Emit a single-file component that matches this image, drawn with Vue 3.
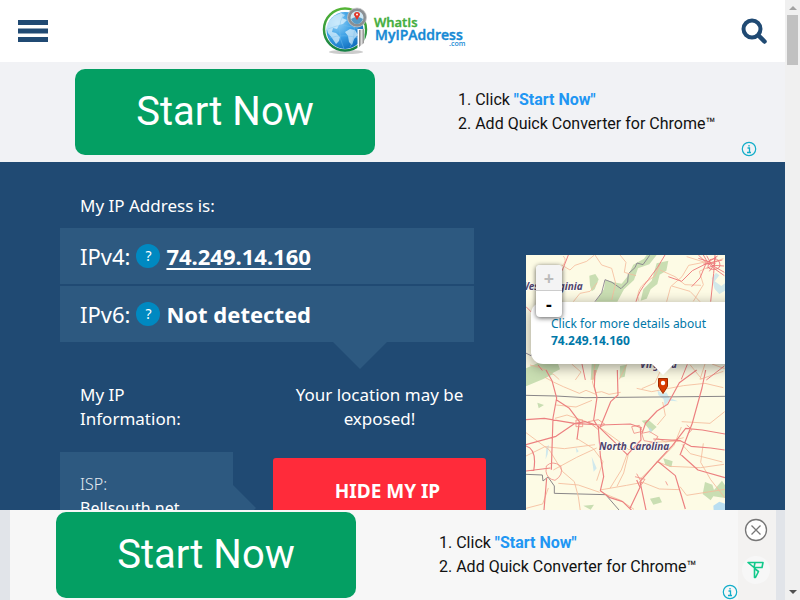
<script setup>
const steps = [
  { lead: '1. Click ', link: '"Start Now"' },
  { lead: '2. Add Quick Converter for Chrome™', link: '' },
]
const addresses = [
  { label: 'IPv4:', value: '74.249.14.160', href: '#ip' },
  { label: 'IPv6:', value: 'Not detected', href: '' },
]
</script>

<template>
  <div class="window">
    <div class="page">
      <header class="header">
        <button class="icon-button" aria-label="Menu">
          <svg width="30" height="22" viewBox="0 0 30 22" fill="#204a73"><path d="M0 0h30v5H0zM0 8.5h30v5H0zM0 17h30v5H0z" /></svg>
        </button>
        <a class="logo" href="#home" aria-label="What Is My IP Address">
          <svg width="148" height="52" viewBox="0 0 148 52">
            <defs>
              <radialGradient id="sea" cx=".3" cy=".3" r=".8"><stop offset="0" stop-color="#8fd0f7" /><stop offset=".5" stop-color="#3a9fe4" /><stop offset="1" stop-color="#0d69ba" /></radialGradient>
              <linearGradient id="ring" x2="0" y2="1"><stop stop-color="#54b435" /><stop offset="1" stop-color="#168246" /></linearGradient>
              <linearGradient id="steel"><stop stop-color="#777" /><stop offset=".5" stop-color="#ddd" /><stop offset="1" stop-color="#888" /></linearGradient>
            </defs>
            <ellipse cx="25" cy="47" rx="17" ry="2" fill="#ccc" />
            <circle cx="24" cy="24.500" r="21" fill="#fff" stroke="url(#ring)" stroke-width="2.500" />
            <circle cx="24" cy="25.500" r="18.500" fill="url(#sea)" />
            <path d="M9 15l4-4 7-3 4 2-3 3 5 2-4 4-4 1-2 4-4-1-1 4 4 1 4 4-1 4-3 3-4-6-4-5-2-7zM29 24l5 1 3 5-4 4-2 6-3-3-1-6-3-4z" fill="#e4f5fd" opacity=".7" />
            <path d="M7 24q16-8 34 2M8 33q15-5 33 1M23 8q-9 16 0 36M29 8q9 18 0 34" fill="none" stroke="#75c1ed" stroke-width=".7" opacity=".6" />
            <path d="M36.500 24h7v14l-5 5h-2z" fill="#fff" />
            <path d="M38 25l5-1v14l-5 4z" fill="url(#steel)" />
            <circle cx="36" cy="12.500" r="8" fill="#cfe8f4" stroke="#8b8f93" stroke-width="3" />
            <circle cx="36" cy="12.500" r="9.500" fill="none" stroke="#c8c8c8" stroke-width=".8" />
            <path d="M30 14q6-4 12 0-2 5-6 5t-6-5" fill="#569ac5" />
            <path d="M36 15l-3-5a3 3 0 1 1 6 0z" fill="#e23527" /><circle cx="36" cy="9.500" r="1" fill="#fff" />
            <g font-family="'Open Sans', sans-serif" font-weight="600">
              <text x="53" y="22" font-size="13" fill="#43ad3d" stroke="#43ad3d" stroke-width=".4">WhatIs</text>
              <text x="54" y="35" font-size="14" fill="#1689d4" stroke="#1689d4" stroke-width=".4">MyIPAddress</text>
              <text x="128" y="41" font-size="7" fill="#1689d4">.com</text>
            </g>
          </svg>
        </a>
        <button class="icon-button" aria-label="Search">
          <svg width="26" height="26" viewBox="0 0 26 26" fill="none" stroke="#204a73"><circle cx="11" cy="11" r="8.500" stroke-width="4" /><path d="M17.500 17.500l6 6" stroke-width="4.500" stroke-linecap="round" /></svg>
        </button>
      </header>

      <section class="ad ad-top">
        <a class="start" href="#start">Start Now</a>
        <div class="steps">
          <div v-for="s in steps" :key="s.lead">{{ s.lead }}<a v-if="s.link" href="#start">{{ s.link }}</a></div>
        </div>
        <a class="ad-info" href="#adinfo" aria-label="Ad information">
          <svg width="16" height="16" viewBox="0 0 16 16" fill="none" stroke="#12adc9"><circle cx="8" cy="8" r="6.700" stroke-width="1.200" /><path d="M6.500 7h2v4.500M6 11.500h4M8 4v1.500" stroke-width="1.300" /></svg>
        </a>
      </section>

      <main class="hero">
        <div class="details">
          <h1>My IP Address is:</h1>
          <div class="addresses">
            <div v-for="a in addresses" :key="a.label" class="address">
              <span>{{ a.label }}</span>
              <button class="help" :aria-label="'About ' + a.label">?</button>
              <a v-if="a.href" class="value" :href="a.href">{{ a.value }}</a>
              <strong v-else class="value">{{ a.value }}</strong>
            </div>
          </div>
          <div class="columns">
            <section class="information">
              <h2>My IP<br />Information:</h2>
              <div class="isp"><span>ISP:</span><div>Bellsouth.net</div></div>
            </section>
            <section class="exposure">
              <h2>Your location may be exposed!</h2>
              <a class="hide" href="#hide">HIDE MY IP</a>
            </section>
          </div>
        </div>

        <div class="map">
          <svg class="tiles" viewBox="526 255 199 255" preserveAspectRatio="xMinYMin slice">
            <rect x="526" y="255" width="199" height="255" fill="#fdfbe5" />
            <g transform="translate(520 250) scale(.33333)" fill="none" stroke-linejoin="round">
              <g fill="#c9deb2">
                <path d="M380 15h30l-22 28-34 12-12 35-30 28-20 37h-65l25-38 4-28 25 8 24 4 18-22 17-35 32-18zM208 77l18-5 10 16-12 30-9 6-5-18zM410 40l35-8-6 30-20 12-7 28-20 16-12 28-18 6 8-34 25-26zM18 355l38-17 56-2 8 22-28 14-40 2-34 22zM215 342h24l-18 46-9 2zM66 62l10-8-2 26zM300 348l20-4-6 36-15 4z" />
              </g>
              <g fill="#bfdfed"><path d="M575 85l13-17 10 8-14 18 20 14 11-8v22l-17 10-14-15-5-18z" fill-opacity=".7" /></g>
              <path d="M15 308l18 9 15-18M245 128l10-39 21 8 27 19 20-20 2-25 20-18 6-14 18 5 20-28M225 155l20-27" stroke="#82798a" stroke-width="2.500" />
              <g stroke="#f5bd9e" stroke-width="2.500">
                <path d="M125 45l25 15 15-14 35-12 22-18M130 18q12 14-2 28M225 15l20 30 30 10 12 45-12 50M160 155l20-25 30-6 22-26M300 15l18 22-5 30 35 10M355 152q-8-30 20-54l30-20 15-35M440 155l12-45 34-30 20-34 60-12M455 108l55 16 30 31M520 154l30-50-12-40 25-12M420 60l45 20 30 24 48 2M30 345q60 12 88 44M155 342l28 24-17 24M225 342l-8 48M320 344l-22 44M510 344l36 44M555 342l-15 46 70-24M500 20l65 20 45-14M576 342l38 14" />
              </g>
              <g stroke="#ef8383" stroke-width="3">
                <path d="M145 15l-18 46-20 2-6 25M348 155q7-30 37-66t50-74M445 80l40 14 32-32 40-20 50-12M550 15l14 24 18 16 31 22M535 15l24 23-19 46-25 26M585 15l-4 55-9 85M18 170l18 18 8 40M54 345l20 25M186 342l10 48M502 343l-18 45M613 348l-54 42" />
              </g>
              <g stroke="#ea6f73" stroke-width="2.500"><path d="M560 17l15 28 38 22M535 25l32 10 26-17M560 55l22-9 30 2M550 42l31-1 7-22M587 38l-19 26M570 29q24-8 29 10t-17 19-17-14z" /></g>
            </g>
            <g transform="translate(520 370) scale(.33333)" fill="none" stroke-linejoin="round">
              <g fill="#c9deb2"><path d="M18 8l60-8 22 12-30 15-52 22zM430 265l28 9-4 18-18-8zM555 336l22 8 5 16 24-28 9 14v38l-35-5-8 12-24-19zM390 386l28-6 8 17-26 7zM190 407l32-3-10 15zM52 98l20 7-16 10zM365 152l20-3 25 22-16 14-17-20z" /></g>
              <g fill="#b9def1"><path d="M580 407l18-12 17 6v21h-34z" /><path d="M412 60l15 12 12-5 10 17 25 10-28-2-12 18-3-22-16-13zM79 230l8-5-4 28-6 15 1-22zM167 232l9 12-6 4zM215 260l15 35-9 10zM386 170l11 10-8 12z" opacity=".65" /></g>
              <path d="M18 76l90 2 87 5 420-4M18 313l49 2 2 18 15-12 19 27v22l154 4 40 46" stroke="#898688" stroke-width="3" />
              <g stroke="#f4ba9a" stroke-width="2.500">
                <path d="M75 22l25 14 30 14 48 20 20-9 30 12M230 0l-13 36 10 32 18-3 22 8 35-6M365 56l40-17 15-34M350 55l45 10 95-18 65-7 55 13M108 105l60 6 48-20M105 145l36-10 58 20M18 188l70 52 40 65 35 30 12 45 6 43M170 205l50 31 29 39-19 57M18 258l57-28 58 6 92-12M100 300l70-38 60-28M115 340l60 5 64 22M240 360l80-14 48-9 50 20 62 2M320 256l-16 44-34 55M239 172l58 42 29 25 72-22 84-4M325 253l-14 56-20 40M360 328l55-53 47-49 22-55M410 275l40 14 92 4 70-10M485 155l85 5 44-35M486 223l25 28 96 25M550 220l-8 57 30 52 43 55M18 415l50-13 17-48M255 372l45 18 42 28M480 350l20 26 115-18M410 204l27 12 54-13M412 165l24-29-8-40" />
              </g>
              <g stroke="#ec8080" stroke-width="3.500">
                <path d="M78 0l18 32 14 52-11 60-5 155M18 149l55-4 90 15 78 5 90-3 35 12M18 224l90-25 55-38 32-6 40 12M18 228q34 10 23 75M225 0l-2 50 8 32-10 68 14 22 6 84 10 64-10 42 29 21 38 12 27 26M292 0l2 75-22 20-31 76M530 0l-52 38-35 65-32 20-34 36-11 31M557 0l-11 54-29 105-37 97M378 420l-18-85 50-58 47-50 40-52 50 5 68 12M412 273l54 44 12 40 18 60M235 169l44 43 42 41M361 172l2 38-43 46M400 207l81 5 32 17 59 5 42 6M484 255l50 45 81 23M110 90l38 25 30 40-7 54M18 303l73-9M80 324l-8 96M330 415l30-63-10-22" />
              </g>
              <g stroke="#ef8f86" stroke-width="2.500"><path d="M79 288q18-18 43 0 10 27-17 43-24-4-27-27zM168 150h20v20h-20zM205 155l30-6 20 14-22 14zM335 170l23-4 10 18-26 6zM365 190l24-5 25 15-13 17-29-5zM345 320l30 8-14 20M350 311l17 31M437 334l6 12M500 165l16 14-12 12" /></g>
            </g>
            <g fill="#51446b" stroke="#fff" stroke-width="1" paint-order="stroke" font-family="'Noto Sans', sans-serif" font-size="10" font-weight="700" font-style="italic">
              <text x="520" y="290">West Virginia</text>
              <text x="640" y="368">Virginia</text>
              <text x="599" y="450">North Carolina</text>
            </g>
            <path d="M658.500 378.500h9v8l-4.500 7-4.500-7z" fill="#d93b00" stroke="#9d2a00" /><circle cx="663" cy="383" r="2.200" fill="#fff" />
          </svg>
          <a class="popup" href="#details">Click for more details about <strong>74.249.14.160</strong></a>
          <div class="zoom"><button disabled aria-label="Zoom in">+</button><button aria-label="Zoom out">-</button></div>
        </div>
      </main>

      <aside class="dock">
        <div class="ad ad-bottom">
          <a class="start" href="#start">Start Now</a>
          <div class="steps">
            <div v-for="s in steps" :key="s.lead">{{ s.lead }}<a v-if="s.link" href="#start">{{ s.link }}</a></div>
          </div>
          <a class="ad-info" href="#adinfo" aria-label="Ad information">
            <svg width="16" height="16" viewBox="0 0 16 16" fill="none" stroke="#12adc9"><circle cx="8" cy="8" r="6.700" stroke-width="1.200" /><path d="M6.500 7h2v4.500M6 11.500h4M8 4v1.500" stroke-width="1.300" /></svg>
          </a>
        </div>
        <div class="dock-tools">
          <button aria-label="Close ad"><svg width="24" height="24" viewBox="0 0 24 24" fill="#fff" stroke="#777"><circle cx="12" cy="12" r="10.500" stroke-width="1.300" /><path d="M7.500 7.500l9 9m0-9l-9 9" stroke-width="1.300" /></svg></button>
          <a href="#network" aria-label="Ad network"><svg width="28" height="28" viewBox="0 0 28 28"><circle cx="14" cy="14" r="14" fill="#f7f7f7" /><path d="M6 6.500h15l-1 5h-8zM6 6.500l6 5 1-5M12.500 12.500l4 3-3 6h-1z" fill="none" stroke="#12c98b" stroke-width="1.600" stroke-linejoin="round" /></svg></a>
        </div>
      </aside>
    </div>

    <div class="scrollbar" aria-hidden="true"><i class="up"></i><i class="thumb"></i><i class="down"></i></div>
  </div>
</template>

<style>
body { overflow: hidden; }
</style>

<style scoped>
* { box-sizing: border-box; }
.window { display: flex; height: 100vh; font-family: "Noto Sans", "Open Sans", sans-serif; }
.page { flex: 1; min-width: 0; display: flex; flex-direction: column; }
button { border: 0; padding: 0; margin: 0; background: none; font: inherit; }
a { color: inherit; text-decoration: none; }
svg { display: block; }
h1, h2 { margin: 0; font-size: 17px; font-weight: 400; line-height: 24px; }

.header { flex: none; height: 62px; padding: 0 18px; display: flex; align-items: center; justify-content: space-between; background: #fff; }

.ad { display: flex; align-items: center; font-family: Roboto, sans-serif; font-size: 16px; line-height: 24px; color: #111; }
.ad-top { flex: none; height: 100px; padding-left: 75px; padding-right: 28px; background: #f1f2f5; }
.start { flex: none; width: 300px; height: 86px; border-radius: 10px; background: #049f63; color: #fff; font-size: 40px; line-height: 86px; text-align: center; }
.steps { margin-left: 83px; white-space: nowrap; }
.steps a { color: #2196f3; font-weight: 700; }
.ad-info { margin-left: auto; align-self: flex-end; padding-bottom: 5px; }

.hero { flex: 1; min-height: 0; overflow: hidden; display: flex; align-items: flex-start; gap: 52px; padding: 0 60px; background: #204a73; color: #fff; }
.details { flex: 1; min-width: 0; padding-top: 32px; }
.details h1 { padding-left: 20px; }
.addresses { position: relative; display: grid; gap: 2px; margin-top: 10px; }
.addresses::after { content: ""; position: absolute; top: 100%; left: 273px; border: 27px solid transparent; border-top-color: #2d5980; border-bottom: 0; }
.address { height: 56px; display: flex; align-items: center; gap: 6px; padding-left: 20px; background: #2d5980; font-size: 22px; }
.help { width: 24px; height: 24px; border-radius: 50%; background: #0089c1; color: #fff; font-size: 14px; line-height: 24px; }
.value { font-weight: 700; }
a.value { text-decoration: underline; text-underline-offset: 3px; text-decoration-thickness: 2px; }
.columns { display: grid; grid-template-columns: 173px 1fr; gap: 40px; margin-top: 41px; margin-right: -12px; }
.information h2 { padding-left: 20px; }
.isp { position: relative; height: 160px; margin-top: 21px; padding: 20px; background: #2d5980; font-size: 16px; line-height: 24px; }
.isp span { font-weight: 300; color: #e4eaf0; }
.isp::after { content: ""; position: absolute; left: 100%; top: 33px; border: 23px solid transparent; border-left-color: #2d5980; border-right: 0; }
.exposure { text-align: center; }
.exposure h2 { padding: 0 20px; }
.hide { display: block; margin-top: 27px; padding-left: 16px; border-radius: 3px; background: #ff2b3a; font-size: 19px; font-weight: 700; line-height: 66px; }

.map { position: relative; flex: none; width: 199px; height: 255px; margin-top: 93px; overflow: hidden; color: #0078a8; }
.tiles { width: 100%; height: 100%; }
.popup { position: absolute; left: 5px; top: 47px; width: 220px; height: 62px; padding: 13px 20px; border-radius: 12px; background: #fff; box-shadow: 0 3px 14px rgba(0, 0, 0, .4); font-size: 12px; line-height: 17px; }
.popup strong { display: block; }
.popup::after { content: ""; position: absolute; top: 100%; left: 121px; border: 11px solid transparent; border-top-color: #fff; border-bottom: 0; }
.zoom { position: absolute; left: 10px; top: 10px; width: 26px; border-radius: 4px; overflow: hidden; background: #fff; box-shadow: 0 1px 5px rgba(0, 0, 0, .65); }
.zoom button { display: block; width: 26px; height: 26px; color: #000; font-size: 18px; font-weight: 700; line-height: 26px; }
.zoom button:disabled { background: #f4f4f4; color: #bbb; border-bottom: 1px solid #ccc; }

.dock { flex: none; height: 90px; display: flex; padding: 0 9px 0 10px; background: #e1e4e9; }
.ad-bottom { flex: 1; min-width: 0; padding-left: 46px; background: #f7f7f7; }
.ad-bottom .ad-info { padding-bottom: 0; }
.dock-tools { width: 38px; display: flex; flex-direction: column; align-items: center; gap: 14px; padding: 8px 3px 0 0; background: #f3f2f1; }

.scrollbar { flex: none; width: 15px; display: flex; flex-direction: column; align-items: center; background: #f0f0f0; }
.up { margin: 6px 0 5px; border: 4px solid transparent; border-top: 0; border-bottom-color: #a3a3a3; }
.thumb { width: 11px; height: 50px; background: #c1c1c1; }
.down { margin: auto 0 6px; border: 4px solid transparent; border-bottom: 0; border-top-color: #505050; }
</style>
